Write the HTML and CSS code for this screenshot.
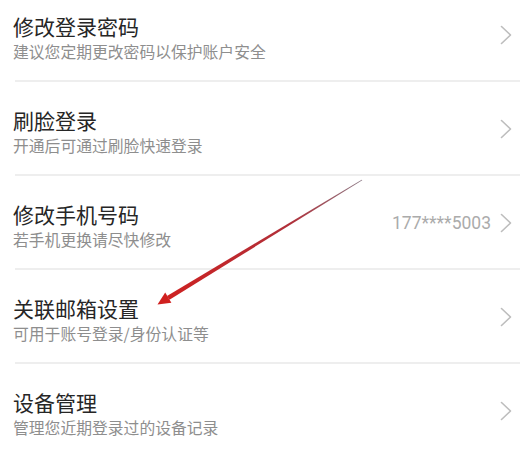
FILE: index.html
```html
<!DOCTYPE html>
<html lang="zh-CN">
<head>
<meta charset="utf-8">
<link rel="stylesheet" href="styles.css">
</head>
<body>
<div class="page">
  <ul class="list">
    <li class="row">
      <div class="text">
        <div class="title">修改登录密码</div>
        <div class="sub">建议您定期更改密码以保护账户安全</div>
      </div>
      <div class="side"><svg class="chev" viewBox="0 0 12 20"><path d="M1.5 1.5 L10.5 10 L1.5 18.5"/></svg></div>
    </li>
    <li class="row">
      <div class="text">
        <div class="title">刷脸登录</div>
        <div class="sub">开通后可通过刷脸快速登录</div>
      </div>
      <div class="side"><svg class="chev" viewBox="0 0 12 20"><path d="M1.5 1.5 L10.5 10 L1.5 18.5"/></svg></div>
    </li>
    <li class="row">
      <div class="text">
        <div class="title">修改手机号码</div>
        <div class="sub">若手机更换请尽快修改</div>
      </div>
      <div class="side"><span class="value">177****5003</span><svg class="chev" viewBox="0 0 12 20"><path d="M1.5 1.5 L10.5 10 L1.5 18.5"/></svg></div>
    </li>
    <li class="row">
      <div class="text">
        <div class="title">关联邮箱设置</div>
        <div class="sub">可用于账号登录/身份认证等</div>
      </div>
      <div class="side"><svg class="chev" viewBox="0 0 12 20"><path d="M1.5 1.5 L10.5 10 L1.5 18.5"/></svg></div>
    </li>
    <li class="row">
      <div class="text">
        <div class="title">设备管理</div>
        <div class="sub">管理您近期登录过的设备记录</div>
      </div>
      <div class="side"><svg class="chev" viewBox="0 0 12 20"><path d="M1.5 1.5 L10.5 10 L1.5 18.5"/></svg></div>
    </li>
  </ul>
  <svg class="annot" width="526" height="450" viewBox="0 0 526 450">
    <defs>
      <linearGradient id="g" x1="362" y1="180" x2="158" y2="304" gradientUnits="userSpaceOnUse">
        <stop offset="0" stop-color="#8c7a86"/>
        <stop offset="0.35" stop-color="#b0303a"/>
        <stop offset="1" stop-color="#d0201f"/>
      </linearGradient>
    </defs>
    <polygon points="362.3,180.3 361.7,179.7 167.0,295.9 169.5,299.7" fill="url(#g)"/>
    <polygon points="157.5,304.5 165.2,292.6 171.4,302.8" fill="#d0201f"/>
  </svg>
</div>
</body>
</html>
```
FILE: styles.css
```css
html, body {
  margin: 0;
  padding: 0;
  background: #ffffff;
}
.page {
  position: relative;
  width: 526px;
  height: 450px;
  overflow: hidden;
  font-family: "Noto Sans CJK SC", "Noto Sans", sans-serif;
}
.list {
  list-style: none;
  margin: -12px 0 0 0;
  padding: 0;
}
.row {
  display: flex;
  align-items: center;
  justify-content: space-between;
  height: 94px;
  box-sizing: border-box;
  padding: 24px 14px 19px 13px;
  background: linear-gradient(#eeeeee, #eeeeee) no-repeat 15px 100% / calc(100% - 21px) 2px;
}
.text {
  display: flex;
  flex-direction: column;
  gap: 1px;
}
.title {
  font-size: 21px;
  line-height: 28px;
  color: #262626;
}
.sub {
  font-size: 15.8px;
  line-height: 22px;
  color: #8e8e8e;
}
.side {
  display: flex;
  align-items: center;
  gap: 9px;
  margin-bottom: 6px;
}
.value {
  font-family: "Roboto", "Noto Sans", sans-serif;
  font-size: 17.5px;
  color: #ababab;
}
.chev {
  width: 12px;
  height: 20px;
}
.chev path {
  fill: none;
  stroke: #bdbdbd;
  stroke-width: 1.6;
  stroke-linecap: round;
  stroke-linejoin: round;
}
.annot {
  position: absolute;
  left: 0;
  top: 0;
  pointer-events: none;
}
```
